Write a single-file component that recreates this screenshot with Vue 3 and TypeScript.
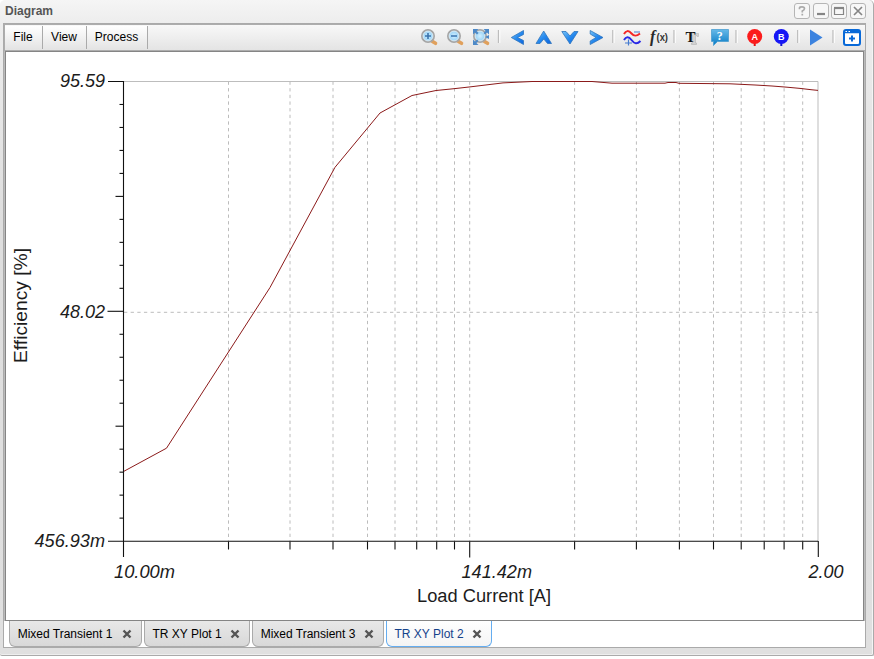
<script setup lang="ts">
import { ref } from 'vue'

interface Tick { pos: number; len: number }

const menus: string[] = ['File', 'View', 'Process']
const tabs: { label: string; width: number; text: number }[] = [
  { label: 'Mixed Transient 1', width: 133, text: 95 },
  { label: 'TR XY Plot 1', width: 106, text: 69 },
  { label: 'Mixed Transient 3', width: 132, text: 95 },
  { label: 'TR XY Plot 2', width: 106, text: 69 },
]
const active = ref(3)

const grid: number[] = [228.5, 290, 333, 367.5, 395, 416.7, 436.7, 454.5, 469.7, 574.6, 636.4, 679.4, 713.5, 741.2, 764.2, 784.1, 802.7]
const xTicks: Tick[] = grid.map((pos) => ({ pos, len: pos === 469.7 ? 16 : 8 }))
const yTicks: Tick[] = Array.from({ length: 19 }, (_, i) => ({
  pos: 81.5 + (i + 1) * 22.98,
  len: i === 9 ? 16 : (i + 1) % 5 === 0 ? 8 : 4,
}))
const curve =
  '123.5,471.5 166.5,448.2 270,287.500 335,167.300 380,113 412,95.5 436,90.5 454,88.7 470,86.9 503,82.9 532,81.5 592,81.5 612,83.2 665,83.2 668,82.5 676,82.5 679,83.3 730,83.8 755,85 772,86 787,87.2 800,88.4 812,89.8 818,90.4'
</script>

<template>
  <div class="window">
    <header class="title">
      <span>Diagram</span>
      <div class="controls">
        <button><svg viewBox="0 0 14 14"><path d="M4.500 5.200V4Q4.500 2.800 7 2.800T9.500 4.500Q9.500 6 7.300 7v1.500M7.300 9.800v1.700" /></svg></button>
        <button><svg viewBox="0 0 14 14"><path d="M3 10h8" class="thick" /></svg></button>
        <button><svg viewBox="0 0 14 14"><path d="M2.500 4.500h9v6h-9z" class="thin" /><path d="M2 4h10" class="thick" /></svg></button>
        <button><svg viewBox="0 0 14 14"><path d="M3 3l8 8M11 3l-8 8" /></svg></button>
      </div>
    </header>
    <div class="frame">
      <nav class="toolbar">
        <div class="menu">
          <button v-for="m in menus" :key="m" :class="m.toLowerCase()">{{ m }}</button>
        </div>
        <svg class="tools" width="450" height="24" viewBox="414 25 450 24">
          <defs>
            <linearGradient id="blue" x1="0" y1="0" x2="1" y2="1">
              <stop offset="0" stop-color="#78c5f8" /><stop offset=".5" stop-color="#2689ee" /><stop offset="1" stop-color="#0b63de" />
            </linearGradient>
            <radialGradient id="lens"><stop offset="0" stop-color="#d3efff" /><stop offset="1" stop-color="#8ccdf4" /></radialGradient>
            <linearGradient id="bubble" x1="0" y1="0" x2="0" y2="1"><stop offset="0" stop-color="#66b9e8" /><stop offset="1" stop-color="#087bc5" /></linearGradient>
          </defs>
          <g v-for="x in [428, 454, 480]" :key="x">
            <path :d="`M${x + 4.5} 41.500l3 1.800`" stroke="#e0a05c" stroke-width="3.600" stroke-linecap="round" />
            <circle :cx="x" cy="36" r="6" fill="url(#lens)" stroke="#a5a5a5" stroke-width="2" />
            <circle :cx="x" cy="36" r="4.900" fill="none" stroke="#e9f4fa" stroke-width=".8" />
          </g>
          <path d="M425 36h6m-3-3v6M451 36h6" stroke="#3973ad" stroke-width="1.600" />
          <path d="M473 29h5.500l-2 2 2 2-1.500 1.500-2-2-2 2zM489 29h-5.500l2 2-2 2 1.500 1.500 2-2 2 2zM473 45v-5.500l2 2 2-2 1.500 1.500-2 2 2 2zM489 39v-4l-4 2z" fill="#4d89c7" />
          <path d="M498.500 30v13M612.800 30v13M674 30v13M736 30v13M797.700 30v13M833 30v13" stroke="#bdbdbd" stroke-width="1.300" />
          <path d="M499.800 30v13M614.100 30v13M675.300 30v13M737.300 30v13M799 30v13M834.300 30v13" stroke="#fff" />
          <g fill="url(#blue)" stroke="#2f75bd" stroke-width=".8" stroke-linejoin="round">
            <path d="M511.300 37.500L523.500 30.500V34.500L517.500 37.500L523.500 40.500V44.500z" />
            <path d="M543.700 31L551.500 43.500H547.500L543.800 39L540 43.500H536z" />
            <path d="M561.800 31.500H566L570 36L574 31.500H578L570 44z" />
            <path d="M590.200 30.500L603 37.500L590.200 44.500V41L596 37.500L590.200 34z" />
          </g>
          <path d="M624 34c2-3.500 4.500-4 7.500-.5s5.500 2.500 8.500 0" fill="none" stroke="#f32626" stroke-width="2" />
          <path d="M624 40c2-3.500 4.500-4 7.500 0s5.500 4.500 9 1" fill="none" stroke="#2929e6" stroke-width="2" />
          <path d="M634 32h6M625 43h7m-3.500-3.500v6" stroke="#467bd0" stroke-width="1.200" />
          <text x="650" y="42"><tspan class="fn">f</tspan><tspan class="arg" x="656.500" y="41" textLength="11.500" lengthAdjust="spacingAndGlyphs">(x)</tspan></text>
          <path d="M690.500 33.500h8v3h-1.500v-1h-1.500v7.500h1v1.500h-5v-1.500h1v-7.500h-2z" fill="#d2d2d2" stroke="#b5b5b5" stroke-width=".6" />
          <text x="685.500" y="42" class="t-main">T</text>
          <path d="M711.500 29.500h17v12h-11l-4 4v-4h-2z" fill="url(#bubble)" stroke="#4c9ed0" stroke-width=".8" />
          <text x="719.800" y="40" class="mark" text-anchor="middle">?</text>
          <path d="M754.700 42v4" stroke="#e51010" stroke-width="2" /><circle cx="754.700" cy="36.500" r="7.500" fill="#fb1c1c" />
          <path d="M781.300 42v4" stroke="#1313d0" stroke-width="2" /><circle cx="781.300" cy="36.500" r="7.500" fill="#1616f5" />
          <text x="754.700" y="39.500" class="pin" text-anchor="middle">A</text>
          <text x="781.300" y="39.500" class="pin" text-anchor="middle">B</text>
          <path d="M810 29.500L822.500 37.500L810 45.500z" fill="#3c83df" />
          <rect x="844" y="30" width="16" height="15" rx="2" fill="#fff" stroke="#0869d8" stroke-width="2" />
          <path d="M844 32h16" stroke="#0869d8" stroke-width="2.500" /><path d="M845.500 31.500h1.500m1.500 0h1.500" stroke="#fff" />
          <path d="M852 35.500v6m-3-3h6" stroke="#0869d8" stroke-width="2" />
        </svg>
      </nav>
      <main class="plot">
        <svg width="857" height="568" viewBox="6 52 857 568">
          <path d="M123 81.500H818V541" class="edge" />
          <line v-for="x in grid" :key="x" :x1="x" y1="81.500" :x2="x" y2="541" class="grid" />
          <path d="M124 312.300H818" class="grid" />
          <polyline :points="curve" class="curve" />
          <g class="axis">
            <path d="M123.500 81V557M108 541.300H818" />
            <path d="M108 81.500H123M818.300 541V557" />
            <path v-for="t in yTicks" :key="t.pos" :d="`M${123.5 - t.len} ${t.pos}h${t.len}`" />
            <path v-for="t in xTicks" :key="t.pos" :d="`M${t.pos} 541.5v${t.len}`" />
          </g>
          <g class="value">
            <text x="60" y="87" textLength="45" lengthAdjust="spacingAndGlyphs">95.59</text>
            <text x="60" y="318" textLength="45" lengthAdjust="spacingAndGlyphs">48.02</text>
            <text x="34.500" y="547" textLength="70.500" lengthAdjust="spacingAndGlyphs">456.93m</text>
            <text x="114" y="578" textLength="61" lengthAdjust="spacingAndGlyphs">10.00m</text>
            <text x="461.500" y="578" textLength="70.500" lengthAdjust="spacingAndGlyphs">141.42m</text>
            <text x="808.500" y="578" textLength="35" lengthAdjust="spacingAndGlyphs">2.00</text>
          </g>
          <text x="417" y="602" textLength="134" lengthAdjust="spacingAndGlyphs" class="label">Load Current [A]</text>
          <text transform="translate(27 363) rotate(-90)" textLength="115" lengthAdjust="spacingAndGlyphs" class="label">Efficiency [%]</text>
        </svg>
      </main>
      <footer class="tabs">
        <button v-for="(t, i) in tabs" :key="t.label" :class="{ active: i === active }" :style="{ width: t.width + 'px' }" @click="active = i">
          <span :style="{ width: t.text + 'px' }">{{ t.label }}</span>
          <svg width="10" height="10" viewBox="0 0 10 10"><path d="M1.500 1.500l7 7M8.500 1.500l-7 7" /></svg>
        </button>
      </footer>
    </div>
  </div>
</template>

<style>
body { background: #fff; overflow: hidden; }
</style>
<style scoped>
* { box-sizing: border-box; }
.window { width: 874px; height: 656px; padding: 0 7px 0 3px; border-right: 1px solid #aaa; border-bottom: 1px solid #aaa; border-radius: 5px 5px 2px 2px; background: linear-gradient(#f5f5f5 0, #ededed 24px, #dedede 220px, #e0e0e0); font: 12px "Liberation Sans", Arial, sans-serif; box-shadow: inset -1px 0 #f4f4f4, inset 0 -1px #eee; }
.title { height: 23px; padding: 3px 0 0 2px; display: flex; justify-content: space-between; color: #555; font-weight: bold; line-height: 16px; }
.controls { display: flex; gap: 2.67px; }
.controls button { width: 16px; height: 16px; padding: 0; border: 1px solid #b5b5b5; border-radius: 3px; background: #f7f7f7; display: flex; }
.controls svg { width: 14px; height: 14px; fill: none; stroke: #858585; stroke-width: 1.7; }
.controls .thick { stroke-width: 2.2; }
.controls .thin { stroke-width: 1.2; }
.controls button:first-child svg { stroke: #aaa; }
.frame { width: 863px; height: 625px; border: 1px solid #aaa; background: #fff; }
.toolbar { height: 27px; border: solid #adadad; border-width: 1px 0 1px 1px; background: linear-gradient(#f8f8f8, #e4e4e4); display: flex; justify-content: space-between; }
.tools { display: block; margin-right: 1px; }
.menu { display: flex; }
.menu button { height: 23px; margin-top: 1px; border: 0; border-right: 1px solid #aaa; padding: 0 1px 2px 0; background: linear-gradient(#fff, #e4e4e4); font: 12px "Liberation Sans", Arial, sans-serif; color: #000; }
.file { width: 38px; }
.view { width: 44px; }
.menu .process { width: 61px; }
.plot { width: 859px; height: 570px; margin-left: 1px; border: 1px solid #858585; background: #fff; box-shadow: 1px 0 #bbb, -1px 0 #bbb; }
.plot svg { display: block; }
.edge { fill: none; stroke: #bdbdbd; }
.grid { stroke: #bcbcbc; stroke-width: 1; stroke-dasharray: 3.3 3.35; }
.curve { fill: none; stroke: #8b1a1a; stroke-width: 1; }
.axis path { fill: none; stroke: #111; stroke-width: 1.1; }
.value { font: italic 18px "Liberation Sans", Arial, sans-serif; fill: #1c1c1c; }
.label { font: 18px "Liberation Sans", Arial, sans-serif; fill: #1c1c1c; }
.tabs { height: 26px; padding-left: 5px; display: flex; gap: 2px; }
.tabs button { height: 26px; flex: none; padding: 0 9px 0 8px; border: 1px solid #aaa; border-top: 0; border-radius: 0 0 6px 6px; background: linear-gradient(#e8e8e8, #d8d8d8); font: 12px "Liberation Sans", Arial, sans-serif; color: #000; display: flex; align-items: center; justify-content: space-between; white-space: nowrap; }
.tabs span { margin-left: -0.5px; }
.tabs svg { stroke: #555; stroke-width: 2.4; }
.tabs .active { color: #15428b; border-color: #65adf0; background: linear-gradient(#fff, #f4f4f4); }
.fn { font: italic bold 16px "Liberation Serif", serif; fill: #292929; }
.arg { font: bold 11px "Liberation Sans", sans-serif; fill: #333; }
.t-main { font: bold 15px "Liberation Serif", serif; fill: #111; }
.mark { font: bold 12px "Liberation Serif", serif; fill: #fff; }
.pin { font: bold 9px "Liberation Sans", sans-serif; fill: #fff; }
</style>
